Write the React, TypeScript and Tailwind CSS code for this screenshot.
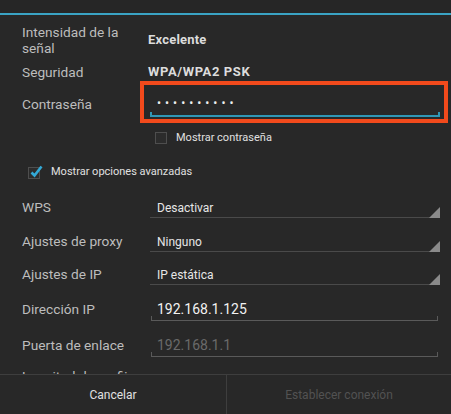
import React from 'react';

const font = { fontFamily: 'Roboto, "Noto Sans", sans-serif' };

const Label: React.FC<{ children: React.ReactNode }> = ({ children }) => (
  <div className="w-[126px] shrink-0 pr-2 text-[13.7px] leading-[16px] text-[#bdbdbd]">{children}</div>
);

const Spinner: React.FC<{ value: string }> = ({ value }) => (
  <div className="relative ml-[2px] mt-[2px] flex h-[20px] flex-1 items-center border-b border-[#4a4a4a] pl-[7px] text-[12px] text-[#e6e6e6]">
    {value}
    <svg className="absolute -bottom-px right-0" width="11" height="11" viewBox="0 0 11 11">
      <polygon points="11,0 11,11 0,11" fill="#8a8a8a" />
    </svg>
  </div>
);

const EditText: React.FC<{ value: string; hint?: boolean }> = ({ value, hint }) => (
  <div
    className={`relative ml-[3px] mr-[2px] mt-[2px] flex h-[22px] flex-1 items-center border-b border-[#5a5a5a] pl-[6px] text-[14px] ${
      hint ? 'text-[#6a6a6a]' : 'text-[#f2f2f2]'
    }`}
  >
    {value}
    <span className="absolute bottom-0 left-0 h-[4px] w-px bg-[#5a5a5a]" />
    <span className="absolute bottom-0 right-0 h-[4px] w-px bg-[#5a5a5a]" />
  </div>
);

const CheckBox: React.FC<{ checked?: boolean }> = ({ checked }) => (
  <div className="relative h-[12px] w-[12px] shrink-0 border border-[#4e4e4e] bg-[#2c2c2c]">
    {checked && (
      <svg className="absolute -top-[3px] left-[1px]" width="13" height="13" viewBox="0 0 13 13">
        <path d="M1.5 7.5 L4.5 10.5 L11.5 1.5" stroke="#33a9d6" strokeWidth="2.6" fill="none" />
      </svg>
    )}
  </div>
);

export default function App() {
  return (
    <div className="flex h-[414px] w-[451px] flex-col overflow-hidden bg-[#282828]" style={font}>
      <div className="h-[374px] shrink-0 overflow-hidden">
        <div className="h-[13px] bg-[#262626]" />
        <div className="h-[2px] bg-[#3aa3c4]" />
        <div className="pl-[22px] pr-[11px] pt-[9px]">
          <div className="flex h-[32px] items-center">
            <Label>
              Intensidad de la
              <br />
              señal
            </Label>
            <div className="text-[13px] font-bold tracking-[0.2px] text-[#dcdcdc]">Excelente</div>
          </div>
          <div className="flex h-[32px] items-center">
            <Label>Seguridad</Label>
            <div className="text-[13px] font-bold tracking-[0.6px] text-[#dcdcdc]">WPA/WPA2 PSK</div>
          </div>
          <div className="flex h-[32px] items-center">
            <Label>Contraseña</Label>
            <div className="relative ml-[2px] flex h-[26px] flex-1 items-center border-b-2 border-[#2f97b6] pl-[7px]">
              <span className="text-[12px] leading-none tracking-[4px] text-[#eeeeee]">••••••••••</span>
              <span className="absolute -bottom-[2px] left-0 h-[5px] w-[2px] bg-[#2f97b6]" />
              <span className="absolute -bottom-[2px] right-0 h-[5px] w-[2px] bg-[#2f97b6]" />
              <div className="pointer-events-none absolute -bottom-[8px] -left-[10px] -right-[8px] -top-[10px] border-[4px] border-[#f24a1c]" />
            </div>
          </div>
          <div className="flex h-[36px] items-center pl-[133px]">
            <CheckBox />
            <span className="ml-[9px] text-[11px] text-[#e0e0e0]">Mostrar contraseña</span>
          </div>
          <div className="flex h-[33px] items-center pl-[6px]">
            <CheckBox checked />
            <span className="ml-[11px] text-[11px] text-[#e0e0e0]">Mostrar opciones avanzadas</span>
          </div>
          <div className="flex h-[36px] items-center">
            <Label>WPS</Label>
            <Spinner value="Desactivar" />
          </div>
          <div className="flex h-[32px] items-center">
            <Label>Ajustes de proxy</Label>
            <Spinner value="Ninguno" />
          </div>
          <div className="flex h-[34px] items-center">
            <Label>Ajustes de IP</Label>
            <Spinner value="IP estática" />
          </div>
          <div className="flex h-[36px] items-center">
            <Label>Dirección IP</Label>
            <EditText value="192.168.1.125" />
          </div>
          <div className="flex h-[36px] items-center">
            <Label>Puerta de enlace</Label>
            <EditText value="192.168.1.1" hint />
          </div>
          <div className="flex items-start pt-[5px]">
            <Label>Longitud de prefijo de red</Label>
          </div>
        </div>
      </div>
      <div className="flex flex-1 border-t border-[#3e3e3e]">
        <div className="flex w-[227px] items-center justify-center border-r border-[#3e3e3e] text-[12px] text-[#e0e0e0]">
          Cancelar
        </div>
        <div className="flex flex-1 items-center justify-center text-[12px] text-[#525252]">
          Establecer conexión
        </div>
      </div>
    </div>
  );
}
